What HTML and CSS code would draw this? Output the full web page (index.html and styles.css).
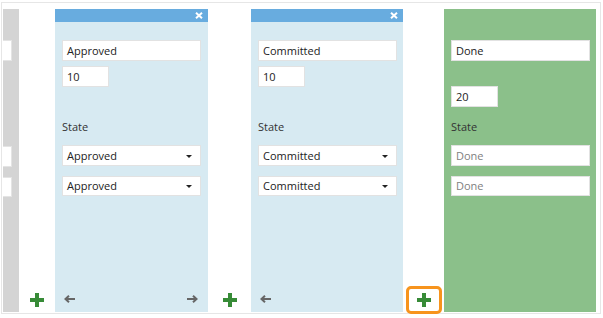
FILE: index.html
```html
<!DOCTYPE html>
<html>
<head>
<meta charset="utf-8">
<link rel="stylesheet" href="styles.css">
</head>
<body>
<div class="frame">
  <div class="stub">
    <div class="stub-field f1"></div>
    <div class="stub-field f3"></div>
    <div class="stub-field f4"></div>
  </div>
  <div class="add-col w36"><span class="plus"></span></div>
  <div class="panel blue w153">
    <div class="head"><svg width="8" height="7" viewBox="0 0 8 7"><path d="M1 0.8L7 6.2M7 0.8L1 6.2" stroke="#fff" stroke-width="2"/></svg></div>
    <div class="field wide top1">Approved</div>
    <div class="field short gap5">10</div>
    <div class="label lbl-blue">State</div>
    <div class="field wide select sel1">Approved<span class="caret"></span></div>
    <div class="field wide select sel2">Approved<span class="caret"></span></div>
    <div class="foot">
      <svg width="11" height="8" viewBox="0 0 11 8"><path d="M11 4H2M5 0.8L1.5 4L5 7.2" stroke="#666" stroke-width="2" fill="none"/></svg>
      <svg width="11" height="8" viewBox="0 0 11 8"><path d="M0 4H9M6 0.8L9.5 4L6 7.2" stroke="#666" stroke-width="2" fill="none"/></svg>
    </div>
  </div>
  <div class="add-col w43"><span class="plus"></span></div>
  <div class="panel blue w152">
    <div class="head"><svg width="8" height="7" viewBox="0 0 8 7"><path d="M1 0.8L7 6.2M7 0.8L1 6.2" stroke="#fff" stroke-width="2"/></svg></div>
    <div class="field wide top1">Committed</div>
    <div class="field short gap5">10</div>
    <div class="label lbl-blue">State</div>
    <div class="field wide select sel1">Committed<span class="caret"></span></div>
    <div class="field wide select sel2">Committed<span class="caret"></span></div>
    <div class="foot">
      <svg width="11" height="8" viewBox="0 0 11 8"><path d="M11 4H2M5 0.8L1.5 4L5 7.2" stroke="#666" stroke-width="2" fill="none"/></svg>
    </div>
  </div>
  <div class="add-col w41 focus"><span class="ring"><span class="plus"></span></span></div>
  <div class="panel green w152">
    <div class="field wide top2">Done</div>
    <div class="field short gap25">20</div>
    <div class="label lbl-green">State</div>
    <div class="field wide ph sel1">Done</div>
    <div class="field wide ph sel2">Done</div>
  </div>
</div>
</body>
</html>
```

FILE: styles.css
```css
* { box-sizing: border-box; }
html, body { margin: 0; padding: 0; background: #fff; }
body {
  font-family: "Open Sans", "Noto Sans", sans-serif;
  font-size: 11px;
  color: #222;
}
.frame {
  margin: 2px 0 0 1px;
  width: 600px;
  height: 312px;
  border: 1px solid #e6e6e6;
  padding: 6px 0 1px 1px;
  display: flex;
  align-items: stretch;
}
.stub {
  width: 16px;
  background: #d4d4d4;
  position: relative;
}
.stub-field {
  background: #fff;
  border: 1px solid #e4e4e4;
  border-left: none;
  width: 9px;
  height: 21px;
}
.stub .f1 { margin-top: 31px; }
.stub .f3 { margin-top: 85px; }
.stub .f4 { margin-top: 10px; height: 20px; }
.add-col {
  display: flex;
  align-items: flex-end;
  justify-content: center;
  padding-bottom: 5px;
}
.w36 { width: 36px; }
.w43 { width: 43px; }
.w41 { width: 41px; justify-content: flex-start; padding-left: 3px; padding-bottom: 0; margin-bottom: -2px; }
.w153 { width: 153px; }
.w152 { width: 152px; }
.plus {
  position: relative;
  display: block;
  width: 14px;
  height: 14px;
}
.plus::before, .plus::after {
  content: "";
  position: absolute;
  background: #378b37;
}
.plus::before { left: 0; top: 5px; width: 14px; height: 4px; }
.plus::after { left: 5px; top: 0; width: 4px; height: 14px; }
.ring {
  display: flex;
  align-items: center;
  justify-content: center;
  width: 36px;
  height: 28px;
  border: 3px solid #f7941d;
  border-radius: 5px;
}
.panel {
  display: flex;
  flex-direction: column;
  padding: 0 7px;
}
.blue { background: #d7eaf2; }
.green { background: #8bc08a; }
.head {
  margin: 0 -7px;
  height: 13px;
  background: #68acdf;
  display: flex;
  justify-content: flex-end;
  align-items: center;
  padding-right: 5px;
}
.field {
  background: #fff;
  border: 1px solid #e2e2e2;
  height: 21px;
  line-height: 19px;
  padding: 0 4px;
  white-space: nowrap;
  position: relative;
}
.wide { width: 139px; }
.short { width: 47px; }
.top1 { margin-top: 18px; }
.top2 { margin-top: 31px; }
.gap5 { margin-top: 5px; }
.gap25 { margin-top: 25px; }
.label {
  height: 16px;
  line-height: 16px;
  color: #333;
}
.lbl-blue { margin-top: 32px; }
.lbl-green { margin-top: 12px; }
.sel1 { margin-top: 10px; }
.sel2 { margin-top: 10px; height: 20px; line-height: 18px; }
.caret {
  position: absolute;
  right: 8px;
  top: 50%;
  margin-top: -1px;
  width: 0;
  height: 0;
  border-left: 3.5px solid transparent;
  border-right: 3.5px solid transparent;
  border-top: 3.5px solid #222;
}
.ph { color: #808080; }
.foot {
  margin-top: auto;
  height: 20px;
  display: flex;
  justify-content: space-between;
  align-items: flex-start;
  padding: 3px 3px 0 2px;
}
```
